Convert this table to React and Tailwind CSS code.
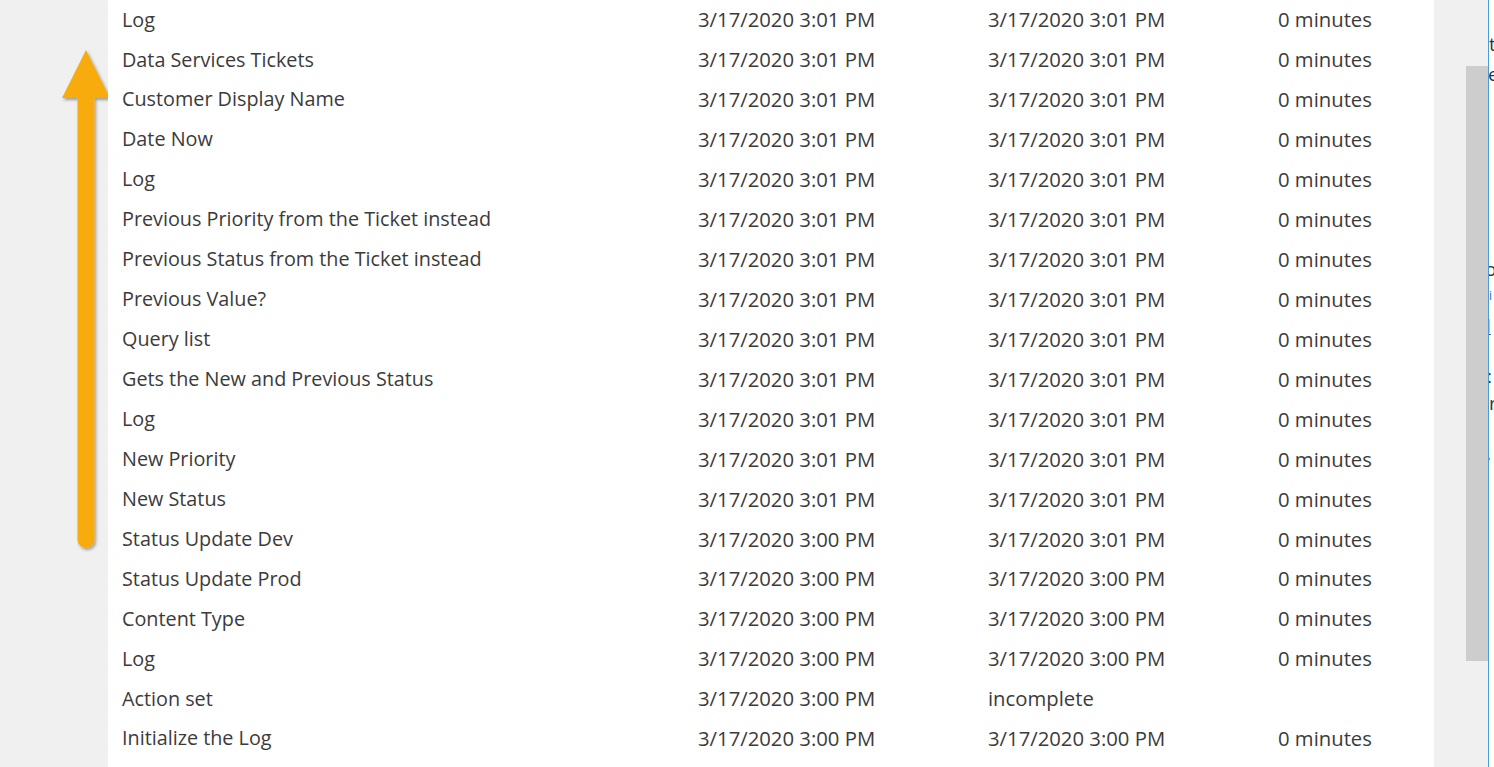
import React from "react";

const rows = [
  ["Log", "3/17/2020 3:01 PM", "3/17/2020 3:01 PM", "0 minutes"],
  ["Data Services Tickets", "3/17/2020 3:01 PM", "3/17/2020 3:01 PM", "0 minutes"],
  ["Customer Display Name", "3/17/2020 3:01 PM", "3/17/2020 3:01 PM", "0 minutes"],
  ["Date Now", "3/17/2020 3:01 PM", "3/17/2020 3:01 PM", "0 minutes"],
  ["Log", "3/17/2020 3:01 PM", "3/17/2020 3:01 PM", "0 minutes"],
  ["Previous Priority from the Ticket instead", "3/17/2020 3:01 PM", "3/17/2020 3:01 PM", "0 minutes"],
  ["Previous Status from the Ticket instead", "3/17/2020 3:01 PM", "3/17/2020 3:01 PM", "0 minutes"],
  ["Previous Value?", "3/17/2020 3:01 PM", "3/17/2020 3:01 PM", "0 minutes"],
  ["Query list", "3/17/2020 3:01 PM", "3/17/2020 3:01 PM", "0 minutes"],
  ["Gets the New and Previous Status", "3/17/2020 3:01 PM", "3/17/2020 3:01 PM", "0 minutes"],
  ["Log", "3/17/2020 3:01 PM", "3/17/2020 3:01 PM", "0 minutes"],
  ["New Priority", "3/17/2020 3:01 PM", "3/17/2020 3:01 PM", "0 minutes"],
  ["New Status", "3/17/2020 3:01 PM", "3/17/2020 3:01 PM", "0 minutes"],
  ["Status Update Dev", "3/17/2020 3:00 PM", "3/17/2020 3:01 PM", "0 minutes"],
  ["Status Update Prod", "3/17/2020 3:00 PM", "3/17/2020 3:00 PM", "0 minutes"],
  ["Content Type", "3/17/2020 3:00 PM", "3/17/2020 3:00 PM", "0 minutes"],
  ["Log", "3/17/2020 3:00 PM", "3/17/2020 3:00 PM", "0 minutes"],
  ["Action set", "3/17/2020 3:00 PM", "incomplete", ""],
  ["Initialize the Log", "3/17/2020 3:00 PM", "3/17/2020 3:00 PM", "0 minutes"],
];

export default function App() {
  return (
    <div
      className="flex h-[767px] w-[1494px] overflow-hidden bg-[#f0f0f0] text-[#3b3b3b]"
      style={{ fontFamily: '"Open Sans", "Noto Sans", sans-serif' }}
    >
      {/* left margin with arrow */}
      <div className="w-[108px] shrink-0">
        <svg width="108" height="767" viewBox="0 0 108 767">
          <defs>
            <filter id="sh" x="-50%" y="-10%" width="200%" height="120%">
              <feDropShadow dx="1.5" dy="2" stdDeviation="1.5" floodColor="#000" floodOpacity="0.35" />
            </filter>
          </defs>
          <g filter="url(#sh)" fill="#f7ab0f">
            <path d="M86 50 L110 98 L62 98 Z" />
            <path d="M77.5 96 H94.5 V539.5 A8.5 8.5 0 0 1 77.5 539.5 Z" />
          </g>
        </svg>
      </div>

      {/* white content panel */}
      <div className="w-[1326px] shrink-0 bg-white">
        <div className="mt-[-0.5px] flex flex-col">
          {rows.map((r, i) => (
            <div key={i} className="flex h-[39.94px] items-center text-[19.8px] leading-none">
              <div className="w-[590px] shrink-0 pl-[14px]">{r[0]}</div>
              <div className="w-[290px] shrink-0 text-[20.3px]">{r[1]}</div>
              <div className="w-[290px] shrink-0 text-[20.3px]">{r[2]}</div>
              <div className="shrink-0 text-[20.3px]">{r[3]}</div>
            </div>
          ))}
        </div>
      </div>

      {/* gray gap */}
      <div className="w-[32px] shrink-0" />

      {/* scrollbar */}
      <div className="w-[22px] shrink-0 pt-[66px]">
        <div className="h-[595px] w-full bg-[#cdcdcd]" />
      </div>

      {/* blue divider */}
      <div className="w-[1px] shrink-0 bg-[#4a9bd6]" />

      {/* clipped next panel */}
      <div className="w-[5px] shrink-0 overflow-hidden bg-white text-[19px] leading-none text-[#333]">
        <div className="mt-[35px] h-[30px]">t</div>
        <div className="h-[195px] -ml-[1px]">e</div>
        <div className="h-[30px] -ml-[4px]">o</div>
        <div className="h-[27px] text-[12px] text-[#2b5fc0]">i</div>
        <div className="h-[50px] -ml-[3px] text-[#1e3fa8] underline">l</div>
        <div className="h-[27px] -ml-[2px]">:</div>
        <div className="h-[50px]">r</div>
        <div className="-ml-[3px]">.</div>
      </div>
    </div>
  );
}
